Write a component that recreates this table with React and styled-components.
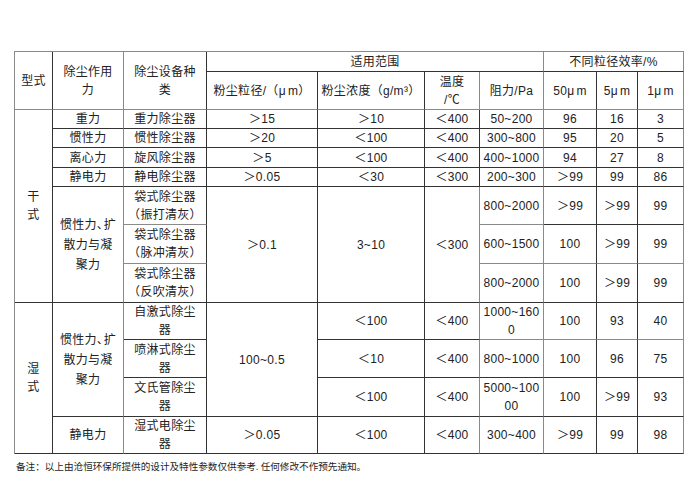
import React from 'react';
import styled, { createGlobalStyle } from 'styled-components';

const DARK = '#333';
const GRAY = '#8a8a8a';

const GlobalStyle = createGlobalStyle`
  html, body { margin: 0; padding: 0; background: #fff; }
  body {
    font-family: "Liberation Sans", "Noto Sans CJK SC", sans-serif;
    color: #222;
  }
`;

const Page = styled.div`
  box-sizing: border-box;
  width: 700px;
  height: 500px;
  padding: 51px 0 0 14px;
`;

const Table = styled.table`
  border-collapse: separate;
  border-spacing: 0;
  table-layout: fixed;
  width: 670px;
  border-top: 1px solid ${GRAY};
  border-left: 1px solid ${GRAY};
`;

const Col = styled.col`
  width: ${(p) => p.$w}px;
`;

const Row = styled.tr`
  height: ${(p) => p.$h}px;
`;

const Cell = styled.td`
  padding: 0 1px;
  border-right: 1px solid ${(p) => (p.$gr ? GRAY : DARK)};
  border-bottom: 1px solid ${(p) => (p.$gb ? GRAY : DARK)};
  text-align: center;
  vertical-align: middle;
  font-size: 12px;
  line-height: ${(p) => p.$lh || 18}px;
  letter-spacing: 0.3px;
  white-space: nowrap;
  overflow: visible;
`;

const Mu = styled.span`
  margin-right: 2px;
`;

const Comma = styled.span`
  letter-spacing: -5px;
`;

const Note = styled.p`
  margin: 5px 0 0 2px;
  font-family: "Noto Sans CJK SC", sans-serif;
  font-size: 9.6px;
  line-height: 14px;
  color: #1e1e1e;
`;

const widths = [38, 71, 83, 111, 107, 55, 64, 53, 41, 46];

const Force = () => (
  <>
    惯性力<Comma>、</Comma>扩<br />散力与凝<br />聚力
  </>
);

export default function App() {
  return (
    <>
      <GlobalStyle />
      <Page>
        <Table>
          <colgroup>
            {widths.map((w, i) => (
              <Col key={i} $w={w} />
            ))}
          </colgroup>
          <tbody>
            <Row $h={20}>
              <Cell rowSpan={2} $gb>型式</Cell>
              <Cell rowSpan={2} $gr $gb>除尘作用<br />力</Cell>
              <Cell rowSpan={2} $gb>除尘设备种<br />类</Cell>
              <Cell colSpan={4} $gr>适用范围</Cell>
              <Cell colSpan={3} $gr>不同粒径效率/%</Cell>
            </Row>
            <Row $h={38}>
              <Cell $gb>粉尘粒径/（<Mu>μ</Mu>m）</Cell>
              <Cell $gb>粉尘浓度（g/m³）</Cell>
              <Cell $gr $gb>温度<br />/℃</Cell>
              <Cell $gr $gb>阻力/Pa</Cell>
              <Cell $gb>50<Mu>μ</Mu>m</Cell>
              <Cell $gb>5<Mu>μ</Mu>m</Cell>
              <Cell $gr $gb>1<Mu>μ</Mu>m</Cell>
            </Row>

            <Row $h={19}>
              <Cell rowSpan={7}>干<br />式</Cell>
              <Cell $gr>重力</Cell>
              <Cell>重力除尘器</Cell>
              <Cell>＞15</Cell>
              <Cell>＞10</Cell>
              <Cell>＜400</Cell>
              <Cell $gr>50~200</Cell>
              <Cell>96</Cell>
              <Cell>16</Cell>
              <Cell $gr>3</Cell>
            </Row>
            <Row $h={19}>
              <Cell $gr>惯性力</Cell>
              <Cell>惯性除尘器</Cell>
              <Cell>＞20</Cell>
              <Cell>＜100</Cell>
              <Cell>＜400</Cell>
              <Cell $gr>300~800</Cell>
              <Cell>95</Cell>
              <Cell>20</Cell>
              <Cell $gr>5</Cell>
            </Row>
            <Row $h={20}>
              <Cell $gr>离心力</Cell>
              <Cell>旋风除尘器</Cell>
              <Cell>＞5</Cell>
              <Cell>＜100</Cell>
              <Cell>＜400</Cell>
              <Cell $gr>400~1000</Cell>
              <Cell>94</Cell>
              <Cell>27</Cell>
              <Cell $gr>8</Cell>
            </Row>
            <Row $h={19}>
              <Cell $gr>静电力</Cell>
              <Cell>静电除尘器</Cell>
              <Cell>＞0.05</Cell>
              <Cell>＜30</Cell>
              <Cell>＜300</Cell>
              <Cell $gr>200~300</Cell>
              <Cell>＞99</Cell>
              <Cell>99</Cell>
              <Cell $gr>86</Cell>
            </Row>
            <Row $h={38}>
              <Cell rowSpan={3} $gr $lh={20}><Force /></Cell>
              <Cell $gb>袋式除尘器<br />（振打清灰）</Cell>
              <Cell rowSpan={3}>＞0.1</Cell>
              <Cell rowSpan={3}>3~10</Cell>
              <Cell rowSpan={3} $gr>＜300</Cell>
              <Cell $gr $gb>800~2000</Cell>
              <Cell>＞99</Cell>
              <Cell>＞99</Cell>
              <Cell $gr>99</Cell>
            </Row>
            <Row $h={39}>
              <Cell $gb>袋式除尘器<br />（脉冲清灰）</Cell>
              <Cell $gr $gb>600~1500</Cell>
              <Cell $gb>100</Cell>
              <Cell $gb>＞99</Cell>
              <Cell $gr $gb>99</Cell>
            </Row>
            <Row $h={39}>
              <Cell>袋式除尘器<br />（反吹清灰）</Cell>
              <Cell $gr>800~2000</Cell>
              <Cell>100</Cell>
              <Cell>＞99</Cell>
              <Cell $gr>99</Cell>
            </Row>

            <Row $h={37}>
              <Cell rowSpan={4}>湿<br />式</Cell>
              <Cell rowSpan={3} $gr $lh={20}><Force /></Cell>
              <Cell>自激式除尘<br />器</Cell>
              <Cell rowSpan={3}>100~0.5</Cell>
              <Cell>＜100</Cell>
              <Cell $gr>＜400</Cell>
              <Cell $gr $gb>1000~160<br />0</Cell>
              <Cell $gb>100</Cell>
              <Cell $gb>93</Cell>
              <Cell $gr $gb>40</Cell>
            </Row>
            <Row $h={38}>
              <Cell>喷淋式除尘<br />器</Cell>
              <Cell>＜10</Cell>
              <Cell $gr>＜400</Cell>
              <Cell $gr>800~1000</Cell>
              <Cell>100</Cell>
              <Cell>96</Cell>
              <Cell $gr>75</Cell>
            </Row>
            <Row $h={39}>
              <Cell>文氏管除尘<br />器</Cell>
              <Cell>＜100</Cell>
              <Cell $gr>＜400</Cell>
              <Cell $gr>5000~100<br />00</Cell>
              <Cell>100</Cell>
              <Cell>＞99</Cell>
              <Cell $gr>93</Cell>
            </Row>
            <Row $h={37}>
              <Cell $gr>静电力</Cell>
              <Cell>湿式电除尘<br />器</Cell>
              <Cell>＞0.05</Cell>
              <Cell>＜100</Cell>
              <Cell $gr>＜400</Cell>
              <Cell $gr>300~400</Cell>
              <Cell>＞99</Cell>
              <Cell>99</Cell>
              <Cell $gr>98</Cell>
            </Row>
          </tbody>
        </Table>
        <Note>备注：以上由沧恒环保所提供的设计及特性参数仅供参考. 任何修改不作预先通知。</Note>
      </Page>
    </>
  );
}
